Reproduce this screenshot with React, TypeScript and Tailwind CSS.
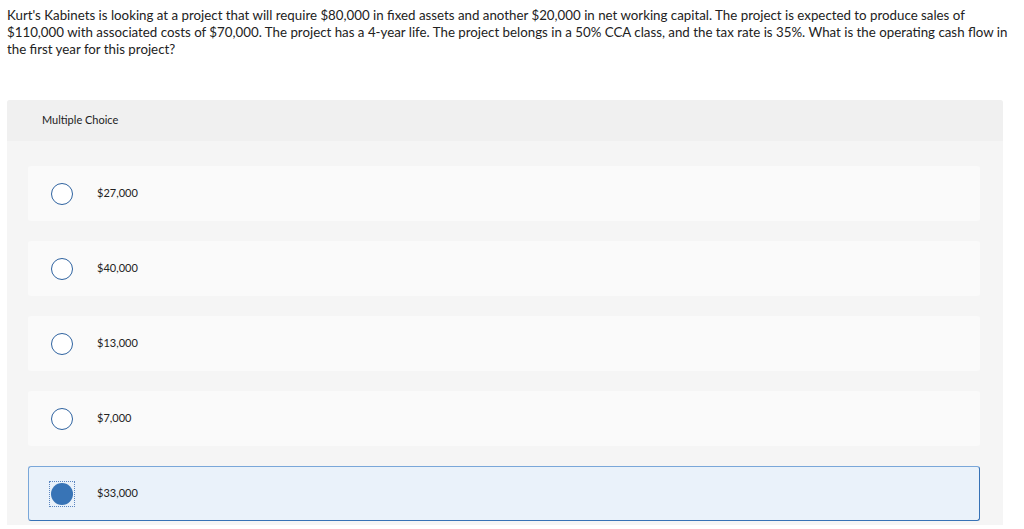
import { useState } from "react";

const choices = ["$27,000", "$40,000", "$13,000", "$7,000", "$33,000"];

export default function App() {
  const [selected, setSelected] = useState(4);

  return (
    <div className="min-h-screen bg-white font-['Lato',sans-serif] text-[#222]">
      <p className="max-w-[1020px] px-[7px] pt-[7px] text-[13.3px] leading-[17px]">
        Kurt's Kabinets is looking at a project that will require $80,000 in fixed assets and another $20,000 in net
        working capital. The project is expected to produce sales of $110,000 with associated costs of $70,000. The
        project has a 4-year life. The project belongs in a 50% CCA class, and the tax rate is 35%. What is the
        operating cash flow in the first year for this project?
      </p>

      <div className="ml-[7px] mt-[42px] w-[996px] overflow-hidden rounded-t-[3px] bg-[#f5f5f5] pb-[4px]">
        <div className="flex h-[41px] items-center bg-[#f0f0f0] px-[35px] text-[11px]">Multiple Choice</div>
        <div className="flex flex-col gap-[20px] px-[21px] pt-[25px]">
          {choices.map((c, i) => {
            const active = i === selected;
            return (
              <button
                key={c}
                type="button"
                onClick={() => setSelected(i)}
                className={
                  active
                    ? "flex h-[55px] w-[952px] items-center rounded-[3px] border border-[#7aa7d9] border-b-[#3672b6] border-r-[#3672b6] bg-[#eaf2fa] text-left"
                    : "flex h-[55px] w-[952px] items-center rounded-[3px] border border-transparent bg-[#fafafa] text-left"
                }
              >
                <span
                  className={
                    active
                      ? "ml-[20px] flex h-[26px] w-[26px] items-center justify-center border border-dotted border-[#5b86c0]"
                      : "ml-[20px] flex h-[26px] w-[26px] items-center justify-center"
                  }
                >
                  {active ? (
                    <span className="block h-[22px] w-[22px] rounded-full bg-[#3874b6]" />
                  ) : (
                    <span className="block h-[22px] w-[22px] rounded-full border-[1.5px] border-[#2f63a0] bg-white" />
                  )}
                </span>
                <span className="ml-[22px] text-[11px]">{c}</span>
              </button>
            );
          })}
        </div>
      </div>
    </div>
  );
}
